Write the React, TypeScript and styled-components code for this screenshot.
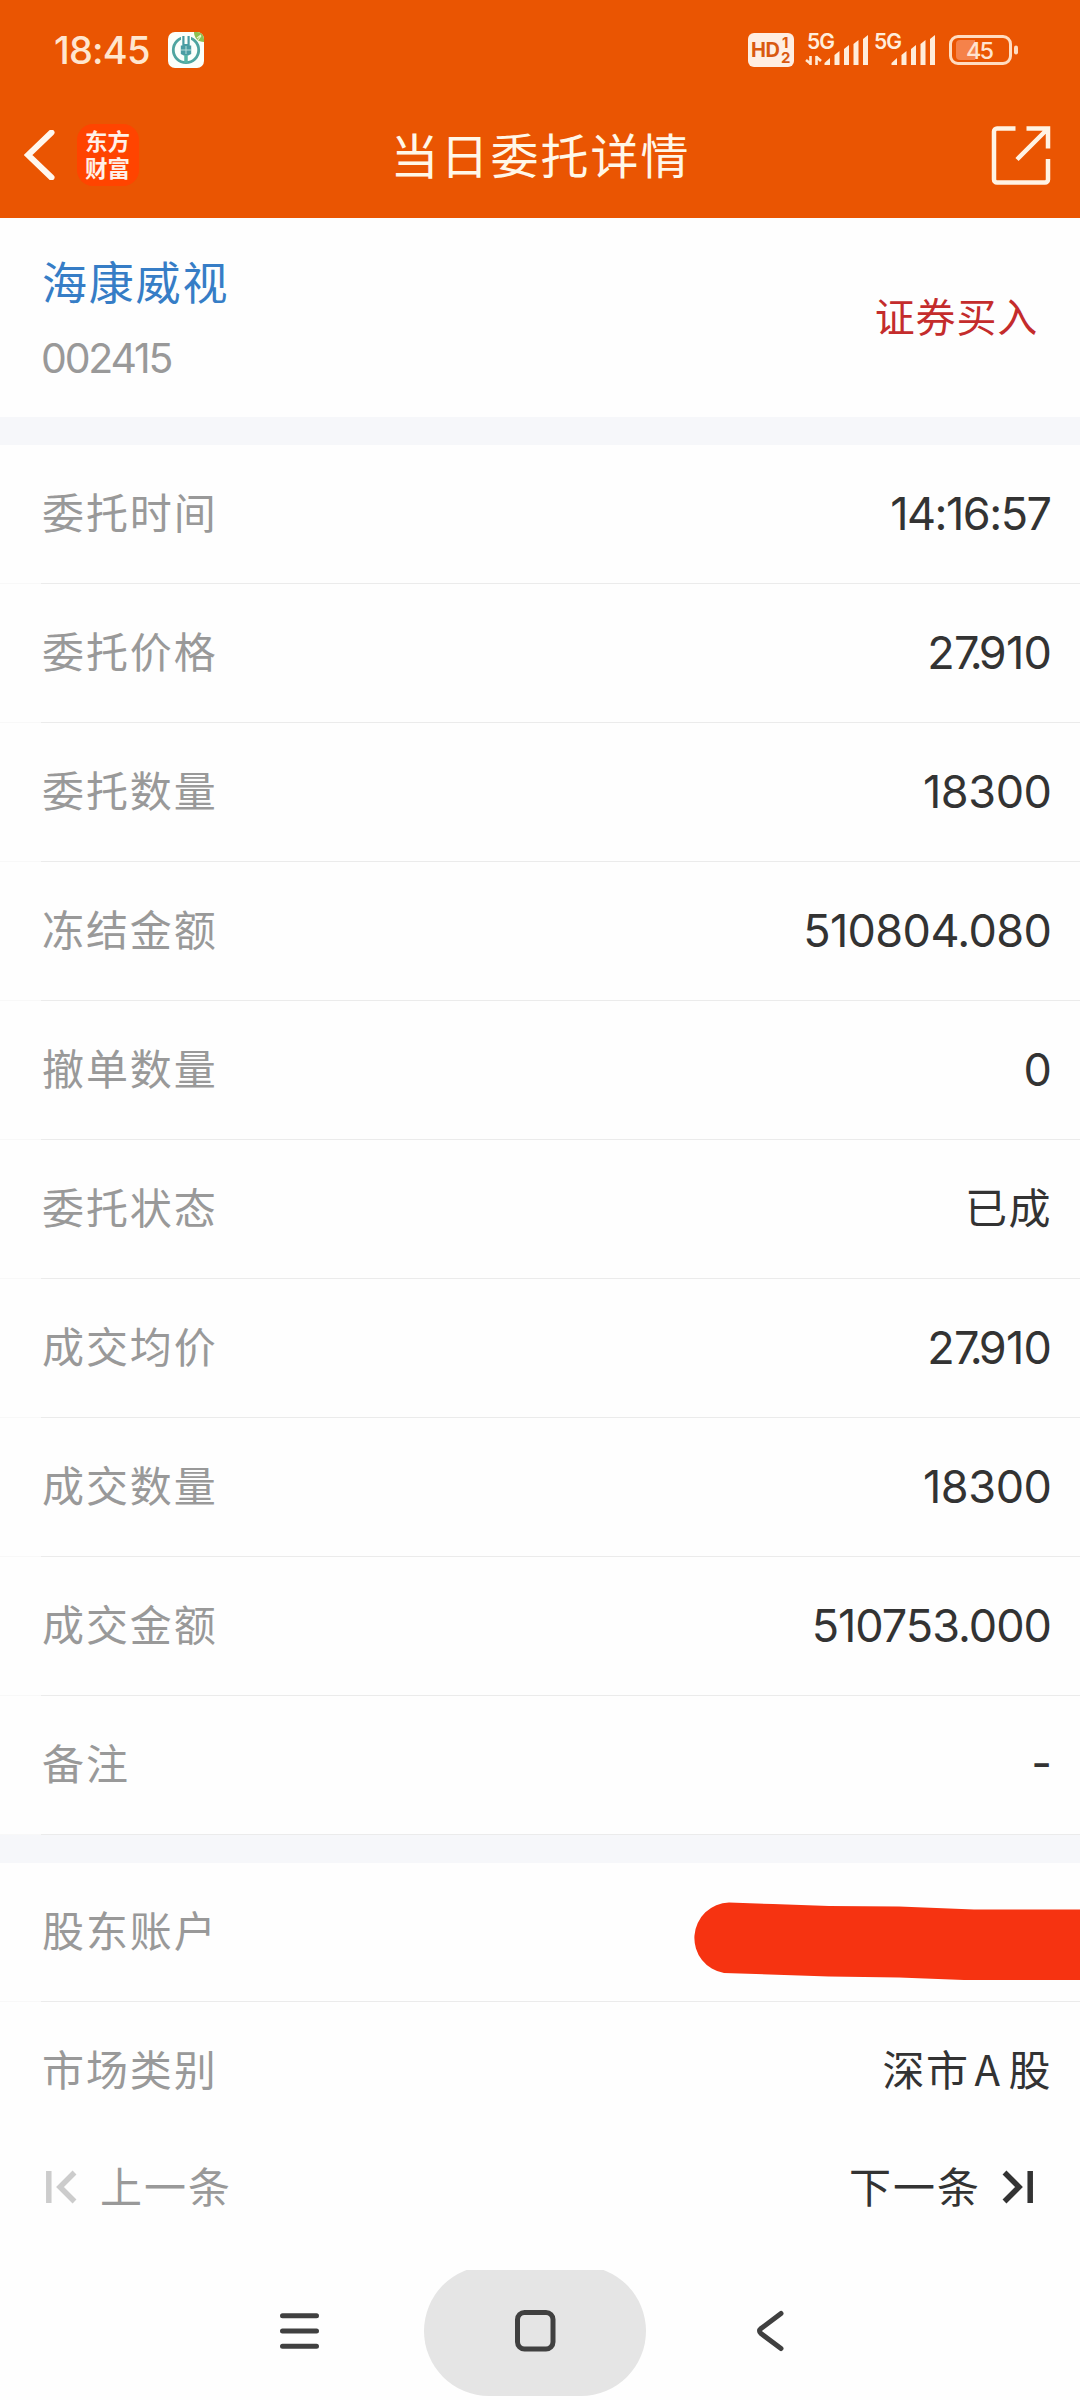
import React from 'react';
import styled, { createGlobalStyle } from 'styled-components';

const cjk = `"Noto Sans CJK SC", "Noto Sans", sans-serif`;
const latin = `Inter, "Noto Sans CJK SC", sans-serif`;
const cream = '#fff3e4';

const GlobalStyle = createGlobalStyle`
  * { box-sizing: border-box; }
  body { margin: 0; background: #fefefe; }
`;

const Screen = styled.main`
  width: 1080px;
  height: 2400px;
  display: flex;
  flex-direction: column;
  overflow: hidden;
  background: #fefefe;
  color: #333;
  font-family: ${cjk};
`;

const Header = styled.header`
  height: 218px;
  flex: none;
  background: #ea5502;
  color: ${cream};
`;

const StatusBar = styled.div`
  height: 100px;
  display: flex;
  align-items: center;
  justify-content: space-between;
  padding: 0 61px 0 54px;
`;

const StatusGroup = styled.div`
  display: flex;
  align-items: center;
`;

const Clock = styled.span`
  width: 114px;
  font: 500 38px/50px ${latin};
  letter-spacing: -0.8px;
  color: #ffe6cf;
`;

const StatusIcon = styled.svg<{ $gap?: number }>`
  display: block;
  flex: none;
  margin-left: ${(p) => p.$gap ?? 0}px;
  font-family: ${latin};
  overflow: visible;
`;

const NavBar = styled.div`
  height: 118px;
  display: grid;
  grid-template-columns: 1fr auto 1fr;
  align-items: center;
  padding: 0 29px 8px 24px;
`;

const NavSide = styled.div<{ $end?: boolean }>`
  display: flex;
  align-items: center;
  justify-content: ${(p) => (p.$end ? 'flex-end' : 'flex-start')};
`;

const Logo = styled.div`
  width: 62px;
  height: 62px;
  margin-left: 22px;
  padding: 3px 0 0 8px;
  border-radius: 16px;
  background: #ff4400;
  font: 700 22.5px/27px ${cjk};
  color: #fff0e8;
`;

const LogoLine = styled.div`
  height: 27px;
`;

const Title = styled.h1`
  margin: 0;
  padding: 0 0 4px 6px;
  font: 400 48px/60px ${cjk};
  letter-spacing: 2px;
  color: #fff7e8;
`;

const Stock = styled.section`
  height: 199px;
  flex: none;
  display: flex;
  align-items: center;
  justify-content: space-between;
  padding: 0 42px 0 42px;
`;

const StockName = styled.div`
  padding-top: 2px;
  font-size: 45px;
  line-height: 64px;
  letter-spacing: 1.8px;
  color: #367dc6;
`;

const StockCode = styled.div`
  margin: 15px 0 0 -1px;
  font: 400 41px/60px ${latin};
  letter-spacing: -2.2px;
  color: #999;
`;

const Side = styled.div`
  padding-bottom: 6px;
  font-size: 40px;
  line-height: 60px;
  letter-spacing: 0.8px;
  color: #c42c2c;
`;

const Band = styled.div`
  height: 28px;
  flex: none;
  background: #f6f7fa;
`;

const Row = styled.div<{ $last?: boolean }>`
  height: 139px;
  flex: none;
  display: flex;
  align-items: center;
  justify-content: space-between;
  padding: 0 28px 1px 42px;
  background: ${(p) =>
    p.$last
      ? 'none'
      : 'linear-gradient(to right, #f8f8f8 41px, #ebebeb 41px) bottom / 100% 1px no-repeat'};
`;

const Label = styled.span`
  padding-bottom: 6px;
  font-size: 42px;
  line-height: 60px;
  letter-spacing: 1.9px;
  color: #999;
`;

const Value = styled.span<{ $cjk?: boolean; $track?: number; $lift?: number }>`
  padding-bottom: ${(p) => (p.$cjk ? 6 : p.$lift ?? 0)}px;
  padding-right: ${(p) => Math.max(0, -(p.$track ?? 0))}px;
  font-family: ${(p) => (p.$cjk ? cjk : latin)};
  font-size: ${(p) => (p.$cjk ? 42 : 45)}px;
  line-height: 60px;
  letter-spacing: ${(p) => p.$track ?? 0}px;
  color: #333;
`;

const Tight = styled.span`
  letter-spacing: -4px;
`;

const WideLetter = styled.span`
  padding: 0 7px 0 5px;
`;

const Redaction = styled.svg`
  display: block;
  margin: 18px -28px 0 0;
`;

const Pager = styled.nav`
  height: 129px;
  flex: none;
  display: flex;
  justify-content: space-between;
  padding: 16px 47px 0 46px;
`;

const PagerButton = styled.button<{ $muted?: boolean }>`
  height: 60px;
  display: flex;
  align-items: center;
  gap: ${(p) => (p.$muted ? 23 : 21)}px;
  padding: 0;
  border: 0;
  background: none;
  color: ${(p) => (p.$muted ? '#999' : '#333')};
`;

const PagerText = styled.span`
  padding-bottom: 5px;
  font: 400 42px/60px ${cjk};
  letter-spacing: 2px;
`;

const SystemNav = styled.footer`
  height: 130px;
  flex: none;
  display: flex;
  padding-left: 279px;
`;

type RowData = { label: string; value: React.ReactNode; cjk?: boolean; track?: number; lift?: number };

const price = (
  <>
    2<Tight>7.</Tight>910
  </>
);

const ROWS: RowData[] = [
  { label: '委托时间', value: '14:16:57', track: -1.5 },
  { label: '委托价格', value: price, track: -0.7 },
  { label: '委托数量', value: '18300', track: -0.4 },
  { label: '冻结金额', value: '510804.080', track: -0.6 },
  { label: '撤单数量', value: '0', track: -0.6 },
  { label: '委托状态', value: '已成', cjk: true, track: 1.5 },
  { label: '成交均价', value: price, track: -0.7 },
  { label: '成交数量', value: '18300', track: -0.4 },
  { label: '成交金额', value: '510753.000', track: -1 },
  { label: '备注', value: '-', lift: 4 },
];

const BankIcon = () => (
  <StatusIcon width="36" height="36" viewBox="0 0 36 36">
    <rect width="36" height="36" rx="7" fill="#fbfffb" />
    <path d="M26 0h3a7 7 0 0 1 7 7v3c-6 0-10-4-10-10z" fill="#8cc152" />
    <path d="M29 6l4-3M30 8l3-4" stroke="#e6f5c8" strokeWidth="1.2" />
    <circle cx="18" cy="18" r="12.700" fill="none" stroke="#4fa5a0" strokeWidth="2.800" />
    <path d="M13 2.500h10v7H13z" fill="#fbfffb" />
    <path d="M14.300 4v9.500h-1.500V22l3 1.500h4.400l3-1.500v-8.500h-1.500V4h-2.200v8h-3V4z" fill="#4a9da3" />
    <path d="M13 18h10M18 14v8" stroke="#bfe3e0" strokeWidth="0.900" />
    <path d="M18 23v8" stroke="#55b5a4" strokeWidth="3.500" />
  </StatusIcon>
);

const HdIcon = () => (
  <StatusIcon width="46" height="34" viewBox="0 0 46 34">
    <rect width="46" height="34" rx="6" fill="#ffeee2" />
    <g fill="#d9590f" fontWeight="700">
      <text x="3" y="24" fontSize="20" textLength="29">HD</text>
      <text x="34" y="15" fontSize="15">1</text>
      <text x="33" y="30" fontSize="15">2</text>
    </g>
  </StatusIcon>
);

const Signal = ({ data, gap }: { data?: boolean; gap: number }) => (
  <StatusIcon $gap={gap} width="63" height="42" viewBox="0 -4 63 42">
    <text x="1" y="15.500" fontSize="21" fontWeight="600" fill="#ffeddc" textLength="28">5G</text>
    {data && (
      <path d="M4.500 32V23M5 31L0 27M10.500 23v9M10 23.500L15 28" stroke="#ffe9d5" strokeWidth="2.600" fill="none" />
    )}
    <g fill="#ffedda">
      <path d="M18.500 30l5.500-5v7h-5.500z" />
      <path d="M28.500 22l5-4v14h-5z" />
      <path d="M38 16l5-4v20h-5z" />
      <path d="M47.500 11l5-4v25h-5z" />
      <path d="M57 6l5-4v30h-5z" />
    </g>
  </StatusIcon>
);

const BatteryIcon = () => (
  <StatusIcon $gap={13} width="70" height="32" viewBox="0 0 70 32">
    <rect x="1.500" y="2.500" width="60" height="27" rx="7.500" fill="none" stroke="#ffdcc0" strokeWidth="3" />
    <path d="M11 6h15v20H11a4 4 0 0 1-4-4V10a4 4 0 0 1 4-4z" fill="#f5824a" />
    <rect x="65" y="11.500" width="4" height="9" rx="2" fill="#ffdcc0" />
    <text x="17" y="25" fontSize="23.500" fontWeight="500" fill="#ffe3cf" textLength="28">45</text>
  </StatusIcon>
);

export default function App() {
  return (
    <>
      <GlobalStyle />
      <Screen>
        <Header>
          <StatusBar>
            <StatusGroup>
              <Clock>18:45</Clock>
              <BankIcon />
            </StatusGroup>
            <StatusGroup>
              <HdIcon />
              <Signal data gap={12} />
              <Signal gap={4} />
              <BatteryIcon />
            </StatusGroup>
          </StatusBar>
          <NavBar>
            <NavSide>
              <svg width="31" height="50" viewBox="0 0 31 50">
                <path d="M27.500 2.500L4 25l23.500 22.500" fill="none" stroke="#fff7ee" strokeWidth="6" strokeLinecap="round" />
              </svg>
              <Logo>
                <LogoLine>东方</LogoLine>
                <LogoLine>财富</LogoLine>
              </Logo>
            </NavSide>
            <Title>当日委托详情</Title>
            <NavSide $end>
              <svg width="60" height="60" viewBox="0 0 60 60" fill="none" stroke="#fff3e4" strokeWidth="4.500">
                <path d="M24.500 3.500H6a3 3 0 0 0-3 3v48a3 3 0 0 0 3 3h48a3 3 0 0 0 3-3V34" />
                <path d="M35.500 3.500H57v20M57 3.500L26 34.500" />
              </svg>
            </NavSide>
          </NavBar>
        </Header>

        <Stock>
          <div>
            <StockName>海康威视</StockName>
            <StockCode>002415</StockCode>
          </div>
          <Side>证券买入</Side>
        </Stock>
        <Band />

        {ROWS.map((r) => (
          <Row key={r.label}>
            <Label>{r.label}</Label>
            <Value $cjk={r.cjk} $track={r.track} $lift={r.lift}>{r.value}</Value>
          </Row>
        ))}
        <Band />

        <Row>
          <Label>股东账户</Label>
          <Redaction width="387" height="79" viewBox="0 0 387 79">
            <path
              d="M36 .5L80 2l56 2 70 .5 75 3h106V78H271l-65-2.500-70-1L31 71A35.500 35.500 0 0 1 36 .5z"
              fill="#f63311"
            />
          </Redaction>
        </Row>
        <Row $last>
          <Label>市场类别</Label>
          <Value $cjk $track={1.5}>
            深市<WideLetter>A</WideLetter>股
          </Value>
        </Row>

        <Pager>
          <PagerButton $muted>
            <svg width="31" height="34" viewBox="0 0 31 34" fill="none" stroke="#ccc" strokeWidth="5.500">
              <path d="M2.800 1v32M28.500 2.500L14 17l14.500 14.500" />
            </svg>
            <PagerText>上一条</PagerText>
          </PagerButton>
          <PagerButton>
            <PagerText>下一条</PagerText>
            <svg width="31" height="34" viewBox="0 0 31 34" fill="none" stroke="#333" strokeWidth="5.500">
              <path d="M28.200 1v32M2.500 2.500L17 17 2.500 31.500" />
            </svg>
          </PagerButton>
        </Pager>

        <SystemNav>
          <svg width="510" height="130" viewBox="279 2270 510 130" fill="none" stroke="#404040" strokeWidth="5" strokeLinecap="round" strokeLinejoin="round">
            <rect x="424" y="2266" width="222" height="130" rx="65" fill="#e5e5e5" stroke="none" />
            <path d="M282.500 2315.700h34M282.500 2331h34M282.500 2346.300h34" />
            <rect x="517.500" y="2312.500" width="35.500" height="36.500" rx="7" />
            <path d="M781 2313.500l-20 15q-3 2.500 0 5l20 15" />
          </svg>
        </SystemNav>
      </Screen>
    </>
  );
}
